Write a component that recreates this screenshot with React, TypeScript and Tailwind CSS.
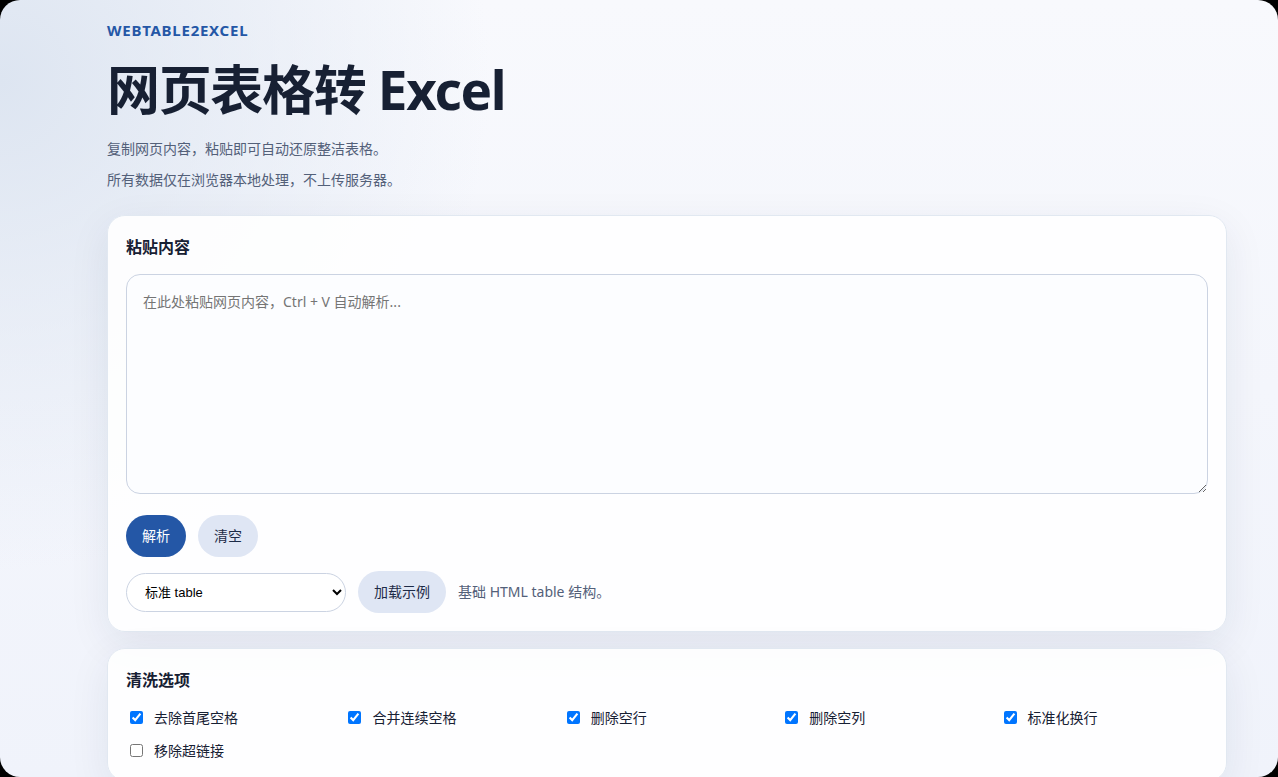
import { useState } from "react";

const samples = [
  { id: "standard", name: "标准 table", note: "基础 HTML table 结构。" },
];

const cleaning = [
  { id: "trim", label: "去除首尾空格", on: true },
  { id: "collapse", label: "合并连续空格", on: true },
  { id: "rows", label: "删除空行", on: true },
  { id: "columns", label: "删除空列", on: true },
  { id: "breaks", label: "标准化换行", on: true },
  { id: "links", label: "移除超链接", on: false },
];

const card =
  "rounded-[18px] border border-[#e1e8f1] bg-white/90 p-[18px] shadow-[0_12px_40px_rgba(24,43,76,0.08)]";
const softButton =
  "h-[42px] rounded-full bg-[#dfe6f4] px-4 text-sm text-[#1d2b47] hover:bg-[#d3ddf0]";

export default function App() {
  const [text, setText] = useState("");
  const [sample, setSample] = useState("standard");

  return (
    <div className="bg-black font-['Noto_Sans','Noto_Sans_CJK_SC',sans-serif] text-[#172033]">
      <div className="h-screen overflow-y-auto rounded-[20px] bg-[radial-gradient(circle_at_0_80px,#dde5f1_0%,rgba(221,229,241,0)_490px),linear-gradient(180deg,#f8f9fd_0%,#f0f3fb_100%)] [scrollbar-width:none]">
        <main className="pt-5 pr-[51px] pb-10 pl-[107px]">
          <header>
            <p className="text-[15px] leading-5 font-bold tracking-wider text-[#2457a6]">WEBTABLE2EXCEL</p>
            <h1 className="mt-4 text-[53px] leading-[68px] font-bold tracking-tight">网页表格转 Excel</h1>
            <p className="mt-[14px] text-sm leading-[22px] text-[#536079]">复制网页内容，粘贴即可自动还原整洁表格。</p>
            <p className="mt-[9px] text-sm leading-[22px] text-[#536079]">所有数据仅在浏览器本地处理，不上传服务器。</p>
          </header>

          <section className={`mt-6 ${card}`}>
            <label htmlFor="source" className="block text-base leading-[26px] font-bold">
              粘贴内容
            </label>
            <textarea
              id="source"
              value={text}
              onChange={(e) => setText(e.target.value)}
              placeholder="在此处粘贴网页内容，Ctrl + V 自动解析..."
              className="mt-[14px] block h-[220px] w-full resize-y rounded-[14px] border border-[#cbd3e2] bg-[#fcfdff] p-4 text-sm leading-[22px] placeholder:text-[#757575]"
            />
            <div className="mt-[21px] flex flex-wrap items-center gap-3">
              <button type="button" className="h-[42px] rounded-full bg-[#2457a6] px-4 text-sm text-white hover:bg-[#1d4a90]">
                解析
              </button>
              <button type="button" className={softButton} onClick={() => setText("")}>
                清空
              </button>
            </div>
            <div className="mt-[14px] flex flex-wrap items-center gap-3">
              <select
                aria-label="示例"
                value={sample}
                onChange={(e) => setSample(e.target.value)}
                className="h-[39px] w-[220px] rounded-full border border-[#cbd3e2] bg-white pl-[14px] font-['Liberation_Sans','Noto_Sans_CJK_SC',sans-serif] text-[13px] text-black"
              >
                {samples.map((s) => (
                  <option key={s.id} value={s.id}>
                    {s.name}
                  </option>
                ))}
              </select>
              <button type="button" className={softButton}>
                加载示例
              </button>
              <span className="text-sm text-[#536079]">{samples.find((s) => s.id === sample)?.note}</span>
            </div>
          </section>

          <section className={`mt-4 ${card}`}>
            <h2 className="text-base leading-[26px] font-bold">清洗选项</h2>
            <div className="mt-[13px] grid grid-cols-5 gap-[10px]">
              {cleaning.map((o) => (
                <label key={o.id} className="flex items-center gap-[11px] pl-1 text-sm leading-[23px]">
                  <input type="checkbox" defaultChecked={o.on} className="h-[13px] w-[13px]" />
                  {o.label}
                </label>
              ))}
            </div>
          </section>
        </main>
      </div>
    </div>
  );
}
